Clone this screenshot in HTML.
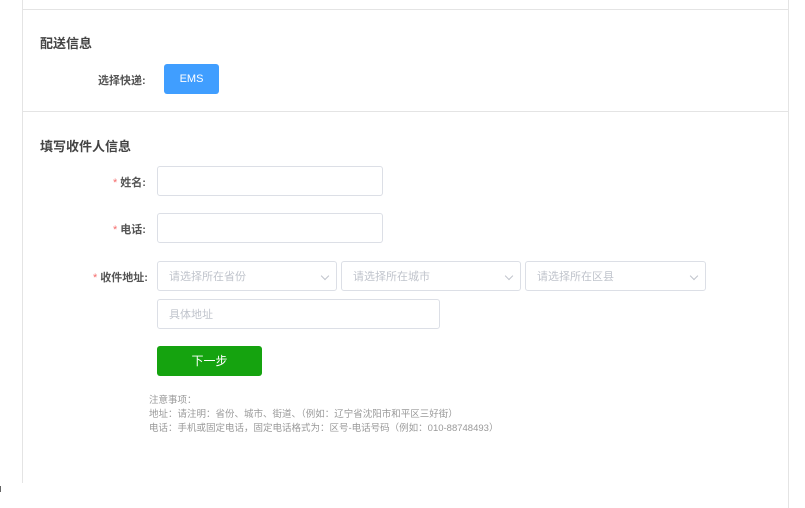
<!DOCTYPE html>
<html><head><meta charset="utf-8"><style>
*{margin:0;padding:0;box-sizing:border-box}
body{width:805px;height:508px;background:#fff;font-family:"Liberation Sans","Noto Sans CJK SC",sans-serif;position:relative;overflow:hidden}
.a{position:absolute}
.box{position:absolute;border:1px solid #dcdfe6;border-radius:3px;background:#fff}
.ph{position:absolute;left:11px;top:50%;transform:translateY(-50%);font-size:11px;color:#c0c4cc;white-space:nowrap}
.lbl{position:absolute;font-size:11px;font-weight:bold;color:#555;text-align:right;white-space:nowrap}
.lbl b{color:#f56c6c;font-weight:normal;margin-right:3px}
.chev{position:absolute;right:8px;top:11px;width:6px;height:6px;border-right:1px solid #c0c4cc;border-bottom:1px solid #c0c4cc;transform:rotate(45deg)}
h3{position:absolute;font-size:13px;font-weight:bold;color:#444}
</style></head><body>
<div class="a" style="left:22px;top:0;width:1px;height:483px;background:#e4e4e4"></div>
<div class="a" style="left:788px;top:0;width:1px;height:508px;background:#e4e4e4"></div>
<div class="a" style="left:22px;top:9px;width:767px;height:1px;background:#e4e4e4"></div>
<div class="a" style="left:22px;top:111px;width:767px;height:1px;background:#e4e4e4"></div>
<div class="a" style="left:0;top:486px;width:1px;height:6px;background:#666"></div>
<h3 style="left:40px;top:33px">配送信息</h3>
<div class="lbl" style="left:98px;top:72px">选择快递:</div>
<div class="a" style="left:164px;top:64px;width:55px;height:30px;background:#409eff;border-radius:3px;color:#fff;font-size:11px;text-align:center;line-height:30px">EMS</div>
<h3 style="left:40px;top:136px">填写收件人信息</h3>
<div class="lbl" style="left:113px;top:174px"><b>*</b>姓名:</div>
<div class="box" style="left:157px;top:166px;width:226px;height:30px"></div>
<div class="lbl" style="left:113px;top:221px"><b>*</b>电话:</div>
<div class="box" style="left:157px;top:213px;width:226px;height:30px"></div>
<div class="lbl" style="left:93px;top:269px"><b>*</b>收件地址:</div>
<div class="box" style="left:157px;top:261px;width:180px;height:30px"><span class="ph">请选择所在省份</span><i class="chev"></i></div>
<div class="box" style="left:341px;top:261px;width:180px;height:30px"><span class="ph">请选择所在城市</span><i class="chev"></i></div>
<div class="box" style="left:525px;top:261px;width:181px;height:30px"><span class="ph">请选择所在区县</span><i class="chev"></i></div>
<div class="box" style="left:157px;top:299px;width:283px;height:30px"><span class="ph">具体地址</span></div>
<div class="a" style="left:157px;top:346px;width:105px;height:30px;background:#15a30f;border-radius:3px;color:#fff;font-size:12px;text-align:center;line-height:30px">下一步</div>
<div class="a" style="left:149px;top:394px;font-size:9.5px;color:#999;line-height:14px;white-space:nowrap">注意事项：<br>地址：请注明：省份、城市、街道、（例如：辽宁省沈阳市和平区三好街）<br>电话：手机或固定电话，固定电话格式为：区号-电话号码（例如：010-88748493）</div>
</body></html>
